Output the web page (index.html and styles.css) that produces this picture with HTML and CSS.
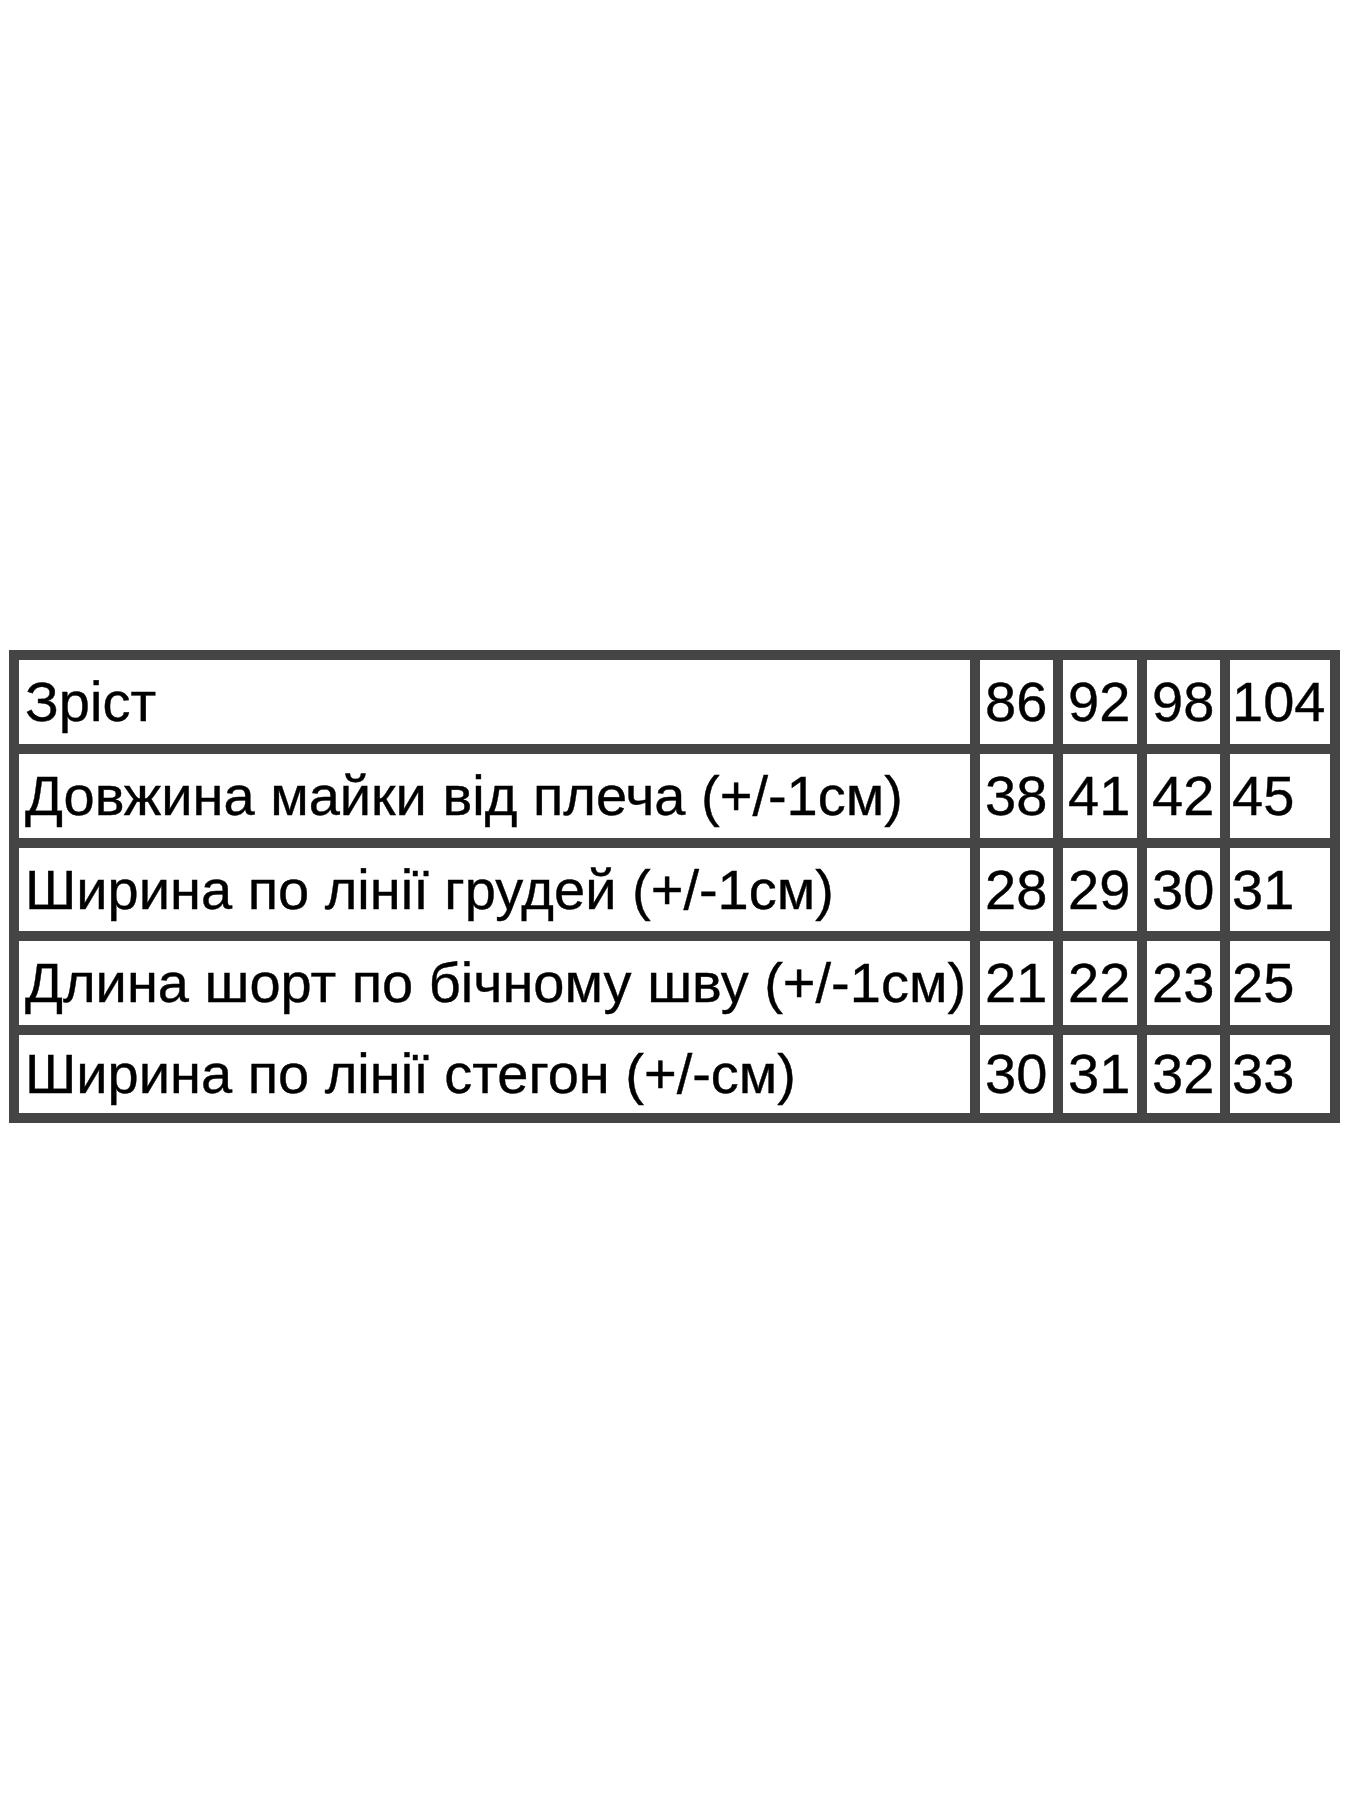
FILE: index.html
```html
<!DOCTYPE html>
<html lang="uk">
<head>
<meta charset="utf-8">
<title>Розмірна сітка</title>
<link rel="stylesheet" href="styles.css">
</head>
<body>
<div class="page">
  <table class="sizes">
    <tr class="r1">
      <td class="label">Зріст</td>
      <td class="num c2">86</td>
      <td class="num c3">92</td>
      <td class="num c4">98</td>
      <td class="num c5">104</td>
    </tr>
    <tr class="r2">
      <td class="label">Довжина майки від плеча (+/-1см)</td>
      <td class="num c2">38</td>
      <td class="num c3">41</td>
      <td class="num c4">42</td>
      <td class="num c5">45</td>
    </tr>
    <tr class="r3">
      <td class="label">Ширина по лінії грудей (+/-1см)</td>
      <td class="num c2">28</td>
      <td class="num c3">29</td>
      <td class="num c4">30</td>
      <td class="num c5">31</td>
    </tr>
    <tr class="r4">
      <td class="label">Длина шорт по бічному шву (+/-1см)</td>
      <td class="num c2">21</td>
      <td class="num c3">22</td>
      <td class="num c4">23</td>
      <td class="num c5">25</td>
    </tr>
    <tr class="r5">
      <td class="label">Ширина по лінії стегон (+/-см)</td>
      <td class="num c2">30</td>
      <td class="num c3">31</td>
      <td class="num c4">32</td>
      <td class="num c5">33</td>
    </tr>
  </table>
</div>
</body>
</html>
```

FILE: styles.css
```css
html, body {
  margin: 0;
  padding: 0;
  background: #ffffff;
}

.page {
  width: 1350px;
  height: 1800px;
  padding-top: 650px;
  padding-left: 9px;
  box-sizing: border-box;
}

.sizes {
  border-collapse: separate;
  border-spacing: 0;
  border-top: 10px solid #454545;
  border-left: 10px solid #454545;
  table-layout: fixed;
  width: 1331px;
  font-family: "Liberation Sans", Arial, sans-serif;
  font-size: 56px;
  color: #000000;
  -webkit-text-stroke: 0.4px #000000;
}

.sizes td {
  box-sizing: border-box;
  border-right: 10px solid #454545;
  border-bottom: 10px solid #454545;
  padding: 0 0 0 5px;
  vertical-align: middle;
  white-space: nowrap;
  overflow: hidden;
  line-height: 1;
}

.sizes td.label {
  width: 961px;
  padding-left: 6px;
}

.sizes td.c2 { width: 83px; }
.sizes td.c3 { width: 84px; }
.sizes td.c4 { width: 83px; }
.sizes td.c5 { width: 110px; padding-left: 2px; }

.r1 td, .r2 td, .r4 td { height: 94px; }
.r3 td { height: 93px; }
.r5 td { height: 88px; }
```
